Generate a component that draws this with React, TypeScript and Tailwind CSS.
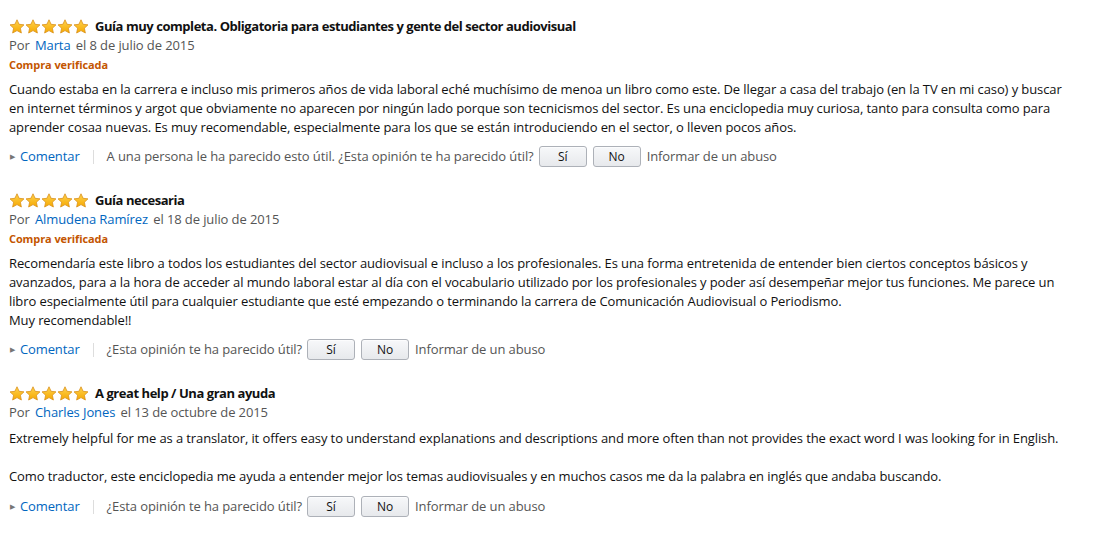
import React from 'react'

interface Review {
  title: string
  author: string
  date: string
  verified: boolean
  paragraphs: string[]
  helpful?: string
}

const REVIEWS: Review[] = [
  {
    title: 'Guía muy completa. Obligatoria para estudiantes y gente del sector audiovisual',
    author: 'Marta',
    date: 'el 8 de julio de 2015',
    verified: true,
    paragraphs: [
      'Cuando estaba en la carrera e incluso mis primeros años de vida laboral eché muchísimo de menoa un libro como este. De llegar a casa del trabajo (en la TV en mi caso) y buscar en internet términos y argot que obviamente no aparecen por ningún lado porque son tecnicismos del sector. Es una enciclopedia muy curiosa, tanto para consulta como para aprender cosaa nuevas. Es muy recomendable, especialmente para los que se están introduciendo en el sector, o lleven pocos años.',
    ],
    helpful: 'A una persona le ha parecido esto útil.',
  },
  {
    title: 'Guía necesaria',
    author: 'Almudena Ramírez',
    date: 'el 18 de julio de 2015',
    verified: true,
    paragraphs: [
      'Recomendaría este libro a todos los estudiantes del sector audiovisual e incluso a los profesionales. Es una forma entretenida de entender bien ciertos conceptos básicos y avanzados, para a la hora de acceder al mundo laboral estar al día con el vocabulario utilizado por los profesionales y poder así desempeñar mejor tus funciones. Me parece un libro especialmente útil para cualquier estudiante que esté empezando o terminando la carrera de Comunicación Audiovisual o Periodismo.\nMuy recomendable!!',
    ],
  },
  {
    title: 'A great help / Una gran ayuda',
    author: 'Charles Jones',
    date: 'el 13 de octubre de 2015',
    verified: false,
    paragraphs: [
      'Extremely helpful for me as a translator, it offers easy to understand explanations and descriptions and more often than not provides the exact word I was looking for in English.',
      'Como traductor, este enciclopedia me ayuda a entender mejor los temas audiovisuales y en muchos casos me da la palabra en inglés que andaba buscando.',
    ],
  },
]

function Star() {
  return (
    <svg width="16" height="15" viewBox="0 0 24 23">
      <defs>
        <linearGradient id="sg" x1="0" y1="0" x2="0" y2="1">
          <stop offset="0" stopColor="#ffd34f" />
          <stop offset="1" stopColor="#f5a800" />
        </linearGradient>
      </defs>
      <path
        d="M12 1.2l3.2 6.9 7.5.9-5.5 5.1 1.5 7.4L12 17.8l-6.7 3.7 1.5-7.4L1.3 9l7.5-.9z"
        fill="url(#sg)"
        stroke="#d9901a"
        strokeWidth="1.2"
        strokeLinejoin="round"
      />
    </svg>
  )
}

function VoteButton({ label }: { label: string }) {
  return (
    <button className="h-[21px] w-[48px] rounded-[3px] border border-[#adb1b8] bg-gradient-to-b from-[#f7f8fa] to-[#e7e9ec] text-[12px] text-[#111] leading-none shadow-[0_1px_0_rgba(255,255,255,0.6)_inset]">
      {label}
    </button>
  )
}

function ReviewItem({ review }: { review: Review }) {
  return (
    <div className="mb-[24px]">
      {/* Stars + title */}
      <div className="flex items-center h-[19px]">
        <div className="flex mr-[6px]">
          {[0, 1, 2, 3, 4].map(i => (
            <Star key={i} />
          ))}
        </div>
        <span className="font-bold tracking-[-0.45px] text-[#111]">{review.title}</span>
      </div>

      <div className="h-[19px] text-[#555]">
        Por <a className="text-[#0066c0] mx-[2px]">{review.author}</a> {review.date}
      </div>

      {review.verified && (
        <div className="h-[19px] text-[11px] font-bold text-[#c45500] leading-[19px]">Compra verificada</div>
      )}

      <div className={`${review.verified ? 'mt-[6px]' : 'mt-[7px]'} text-[#111]`}>
        {review.paragraphs.map((p, i) => (
          <p key={i} className={`whitespace-pre-line ${i > 0 ? 'mt-[19px]' : ''}`}>
            {p}
          </p>
        ))}
      </div>

      {/* Action row */}
      <div className={`flex items-center ${review.verified ? 'mt-[9px]' : 'mt-[10px]'} h-[21px]`}>
        <span className="text-[#767676] text-[7px] ml-[1px] mr-[5px]">▶</span>
        <a className="text-[#0066c0]">Comentar</a>
        <span className="w-px h-[14px] bg-[#ddd] mx-[13px]" />
        <span className="text-[#555]">
          {review.helpful ? review.helpful + ' ' : ''}¿Esta opinión te ha parecido útil?
        </span>
        <div className="flex gap-[6px] ml-[5px] mr-[6px]">
          <VoteButton label="Sí" />
          <VoteButton label="No" />
        </div>
        <span className="text-[#555]">Informar de un abuso</span>
      </div>
    </div>
  )
}

export default function App() {
  return (
    <div
      className="min-h-screen bg-white pl-[9px] pr-[40px] pt-[17px] text-[13px] leading-[19px] tracking-[-0.1px]"
      style={{ fontFamily: '"Open Sans", "Noto Sans", Arial, sans-serif' }}
    >
      {REVIEWS.map((r, i) => (
        <ReviewItem key={i} review={r} />
      ))}
    </div>
  )
}
